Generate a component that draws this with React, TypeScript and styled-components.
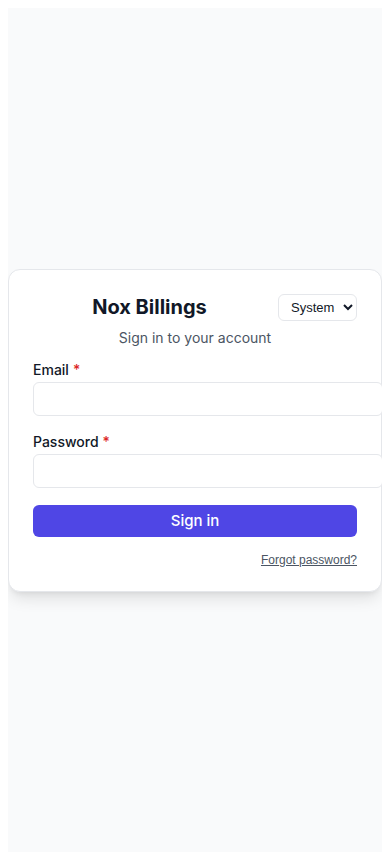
import styled, { createGlobalStyle } from "styled-components";

const GlobalStyle = createGlobalStyle`
  body {
    margin: 8px;
    background: #ffffff;
    font-family: Inter, "Noto Sans", sans-serif;
    color: #111827;
  }
`;

const Page = styled.div`
  min-height: calc(100vh - 16px);
  background: #f9fafb;
  display: flex;
  align-items: center;
  justify-content: center;
`;

const Card = styled.div`
  width: 100%;
  background: #ffffff;
  border: 1px solid #e5e7eb;
  border-radius: 12px;
  padding: 24px;
  box-shadow: 0 10px 15px -3px rgba(0, 0, 0, 0.1), 0 4px 6px -4px rgba(0, 0, 0, 0.1);
`;

const Header = styled.div`
  display: flex;
  align-items: center;
  gap: 12px;
`;

const Title = styled.h1`
  flex: 1;
  margin: 0;
  text-align: center;
  font-size: 20px;
  line-height: 27px;
  font-weight: 700;
  color: #111827;
`;

const ThemeSelect = styled.select`
  height: 27px;
  width: 79px;
  padding: 0 4px 0 8px;
  font-family: "Liberation Sans", Arial, sans-serif;
  font-size: 13px;
  color: #111827;
  background: #ffffff;
  border: 1px solid #e5e7eb;
  border-radius: 6px;
`;

const Subtitle = styled.p`
  margin: 7px 0 0;
  text-align: center;
  font-size: 14px;
  line-height: 20px;
  color: #4b5563;
`;

const Form = styled.form`
  margin-top: 12px;
  display: flex;
  flex-direction: column;
`;

const Field = styled.div<{ $gap?: number }>`
  display: flex;
  flex-direction: column;
  margin-bottom: ${(p) => p.$gap ?? 16}px;
`;

const Label = styled.label`
  font-size: 14px;
  line-height: 20px;
  font-weight: 500;
  color: #111827;
  margin-bottom: 2px;
`;

const Required = styled.span`
  color: #dc2626;
  margin-left: 4px;
`;

const Input = styled.input`
  width: 100%;
  height: 16px;
  padding: 8px 12px;
  box-sizing: content-box;
  border: 1px solid #e5e7eb;
  border-radius: 6px;
  font-size: 14px;
  background: #ffffff;
  outline: none;
`;

const SubmitButton = styled.button`
  width: 100%;
  height: 32px;
  border: none;
  border-radius: 6px;
  background: #4f46e5;
  color: #ffffff;
  font-family: Inter, sans-serif;
  font-size: 15px;
  font-weight: 500;
  cursor: pointer;
`;

const Footer = styled.div`
  display: flex;
  justify-content: flex-end;
  margin-top: 16px;
`;

const LinkButton = styled.button`
  border: none;
  background: none;
  padding: 0;
  font-family: "Liberation Sans", Arial, sans-serif;
  font-size: 12px;
  line-height: 14px;
  color: #4b5563;
  text-decoration: underline;
  cursor: pointer;
`;

export default function App() {
  return (
    <>
      <GlobalStyle />
      <Page>
        <Card>
          <Header>
            <Title>Nox Billings</Title>
            <ThemeSelect defaultValue="system">
              <option value="system">System</option>
              <option value="light">Light</option>
              <option value="dark">Dark</option>
            </ThemeSelect>
          </Header>
          <Subtitle>Sign in to your account</Subtitle>
          <Form onSubmit={(e) => e.preventDefault()}>
            <Field>
              <Label>
                Email<Required>*</Required>
              </Label>
              <Input type="email" />
            </Field>
            <Field $gap={17}>
              <Label>
                Password<Required>*</Required>
              </Label>
              <Input type="password" />
            </Field>
            <SubmitButton type="submit">Sign in</SubmitButton>
          </Form>
          <Footer>
            <LinkButton type="button">Forgot password?</LinkButton>
          </Footer>
        </Card>
      </Page>
    </>
  );
}
